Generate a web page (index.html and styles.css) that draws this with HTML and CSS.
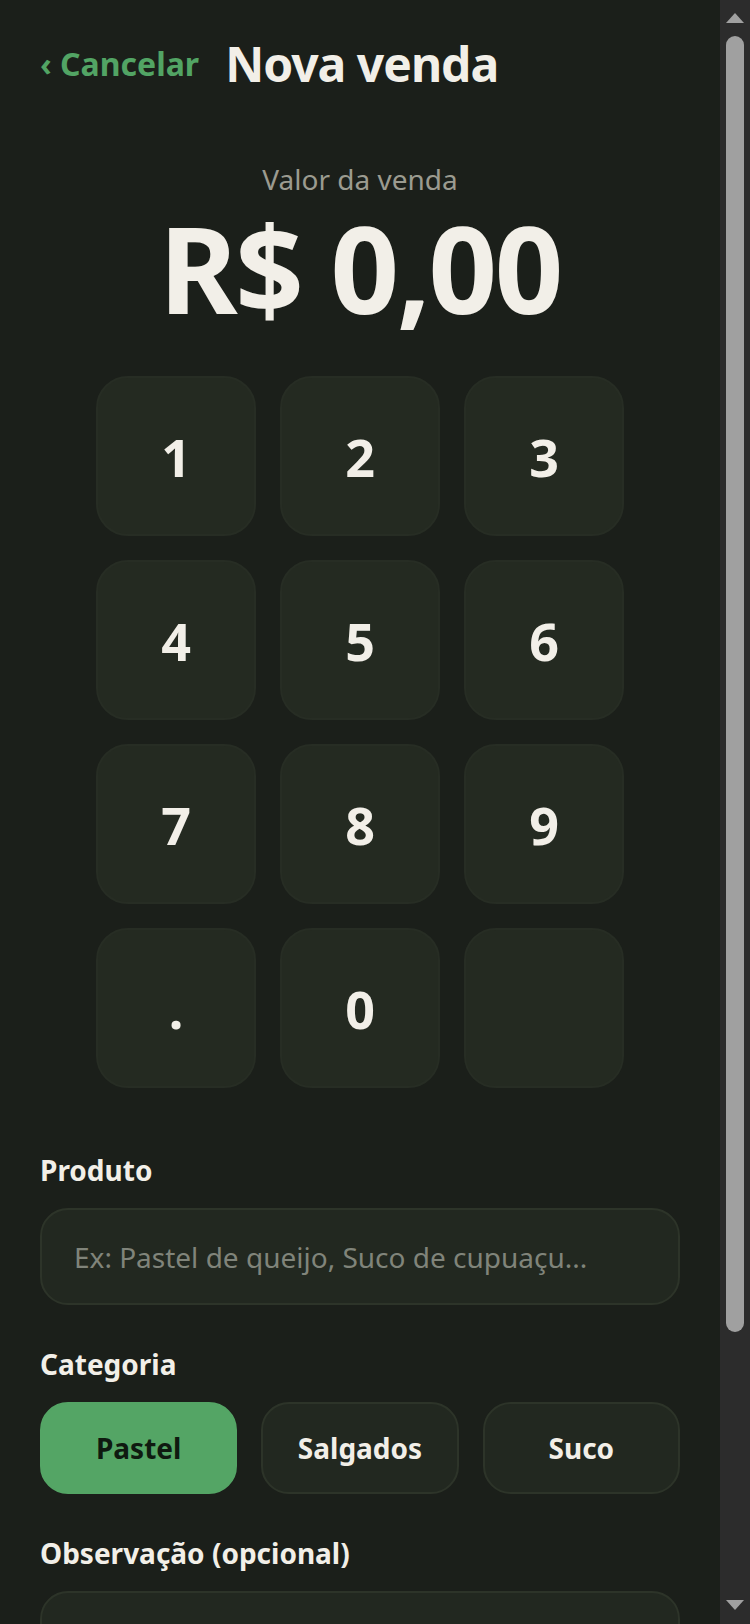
FILE: index.html
```html
<!DOCTYPE html>
<html lang="pt-BR">
<head>
<meta charset="utf-8">
<meta name="viewport" content="width=device-width, initial-scale=1">
<title>Nova venda</title>
<link rel="stylesheet" href="styles.css">
</head>
<body>
<div class="shell">
  <main class="page">
    <header class="topbar">
      <a class="cancel" href="#">‹ Cancelar</a>
      <h1 class="title">Nova venda</h1>
    </header>

    <section class="amount-block">
      <div class="amount-label">Valor da venda</div>
      <div class="amount">R$ 0,00</div>
    </section>

    <section class="keypad">
      <button class="key" type="button">1</button>
      <button class="key" type="button">2</button>
      <button class="key" type="button">3</button>
      <button class="key" type="button">4</button>
      <button class="key" type="button">5</button>
      <button class="key" type="button">6</button>
      <button class="key" type="button">7</button>
      <button class="key" type="button">8</button>
      <button class="key" type="button">9</button>
      <button class="key" type="button">.</button>
      <button class="key" type="button">0</button>
      <button class="key" type="button"></button>
    </section>

    <section class="form">
      <label class="field-label" for="produto">Produto</label>
      <input class="text-input" id="produto" type="text" placeholder="Ex: Pastel de queijo, Suco de cupuaçu...">

      <div class="field-label spaced">Categoria</div>
      <div class="cats">
        <button class="cat active" type="button">Pastel</button>
        <button class="cat" type="button">Salgados</button>
        <button class="cat" type="button">Suco</button>
      </div>

      <label class="field-label spaced" for="obs">Observação (opcional)</label>
      <textarea class="text-area" id="obs"></textarea>

      <button class="save" type="button">Salvar venda</button>
    </section>
  </main>

  <div class="scrollbar" aria-hidden="true">
    <span class="sb-arrow sb-up"></span>
    <span class="sb-track"><span class="sb-thumb"></span></span>
    <span class="sb-arrow sb-down"></span>
  </div>
</div>
</body>
</html>
```

FILE: styles.css
```css
html {
  background: #1b1f1a;
}

body {
  margin: 0;
  background: #1b1f1a;
  color: #f2efe8;
  font-family: "Noto Sans", "Open Sans", sans-serif;
}

.shell {
  display: flex;
  align-items: flex-start;
}

.page {
  flex: 1;
  min-width: 0;
  padding: 31px 40px 40px;
}

/* fake window scrollbar, as in the screenshot */
.scrollbar {
  position: sticky;
  top: 0;
  width: 30px;
  height: 100vh;
  flex: none;
  display: flex;
  flex-direction: column;
  background: #2c2c2c;
}

.sb-arrow {
  display: block;
  width: 0;
  height: 0;
  border-left: 9px solid transparent;
  border-right: 9px solid transparent;
}

.sb-up {
  margin: 13px auto 7px;
  border-bottom: 10px solid #a0a0a0;
}

.sb-down {
  margin: 6px auto 14px;
  border-top: 10px solid #a0a0a0;
}

.sb-track {
  flex: 1;
  display: flex;
  flex-direction: column;
  align-items: center;
  padding-top: 6px;
}

.sb-thumb {
  display: block;
  width: 18px;
  height: 1296px;
  border-radius: 9px;
  background: #a0a0a0;
}

.topbar {
  display: flex;
  align-items: center;
  gap: 26px;
}

.cancel {
  color: #52a464;
  text-decoration: none;
  font-size: 32px;
  font-weight: 700;
}

.title {
  margin: 0;
  font-size: 48px;
  font-weight: 700;
  letter-spacing: -1px;
  color: #f2efe8;
}

.amount-block {
  margin-top: 68px;
  text-align: center;
}

.amount-label {
  font-size: 28px;
  line-height: 30px;
  color: #9b9b90;
}

.amount {
  margin-top: 14px;
  font-size: 120px;
  line-height: 120px;
  font-weight: 700;
  letter-spacing: -2.4px;
  color: #f2efe8;
}

.keypad {
  margin-top: 48px;
  display: grid;
  grid-template-columns: repeat(3, 160px);
  grid-auto-rows: 160px;
  gap: 24px;
  justify-content: center;
}

.key {
  margin: 0;
  padding: 0;
  border: 2px solid #272d24;
  border-radius: 32px;
  background: #242a21;
  color: #f2efe8;
  font-family: "Noto Sans", "Open Sans", sans-serif;
  font-size: 52px;
  font-weight: 700;
}

.form {
  margin-top: 63px;
  display: flex;
  flex-direction: column;
}

.field-label {
  font-size: 28px;
  line-height: 38px;
  font-weight: 700;
  color: #f2efe8;
  margin-bottom: 19px;
}

.field-label.spaced {
  margin-top: 40px;
}

.text-input {
  box-sizing: border-box;
  height: 97px;
  margin: 0;
  padding: 0 32px;
  border: 2px solid #2d3429;
  border-radius: 28px;
  background: #222820;
  color: #f2efe8;
  font-family: "Noto Sans", "Open Sans", sans-serif;
  font-size: 28px;
  outline: none;
}

.text-input::placeholder {
  color: #80847a;
}

.cats {
  display: flex;
  gap: 24px;
}

.cat {
  flex: 1;
  height: 92px;
  margin: 0;
  padding: 0;
  border: 2px solid #2d3429;
  border-radius: 28px;
  background: #222820;
  color: #f2efe8;
  font-family: "Noto Sans", "Open Sans", sans-serif;
  font-size: 28px;
  font-weight: 700;
}

.cat.active {
  background: #54a565;
  border-color: #54a565;
  color: #0f1a10;
}

.text-area {
  box-sizing: border-box;
  height: 180px;
  margin: 0;
  padding: 24px 32px;
  border: 2px solid #2d3429;
  border-radius: 28px;
  background: #222820;
  color: #f2efe8;
  font-family: "Noto Sans", "Open Sans", sans-serif;
  font-size: 28px;
  resize: none;
  outline: none;
}

.save {
  margin-top: 40px;
  height: 104px;
  border: none;
  border-radius: 28px;
  background: #54a565;
  color: #0f1a10;
  font-family: "Noto Sans", "Open Sans", sans-serif;
  font-size: 32px;
  font-weight: 700;
}
```
